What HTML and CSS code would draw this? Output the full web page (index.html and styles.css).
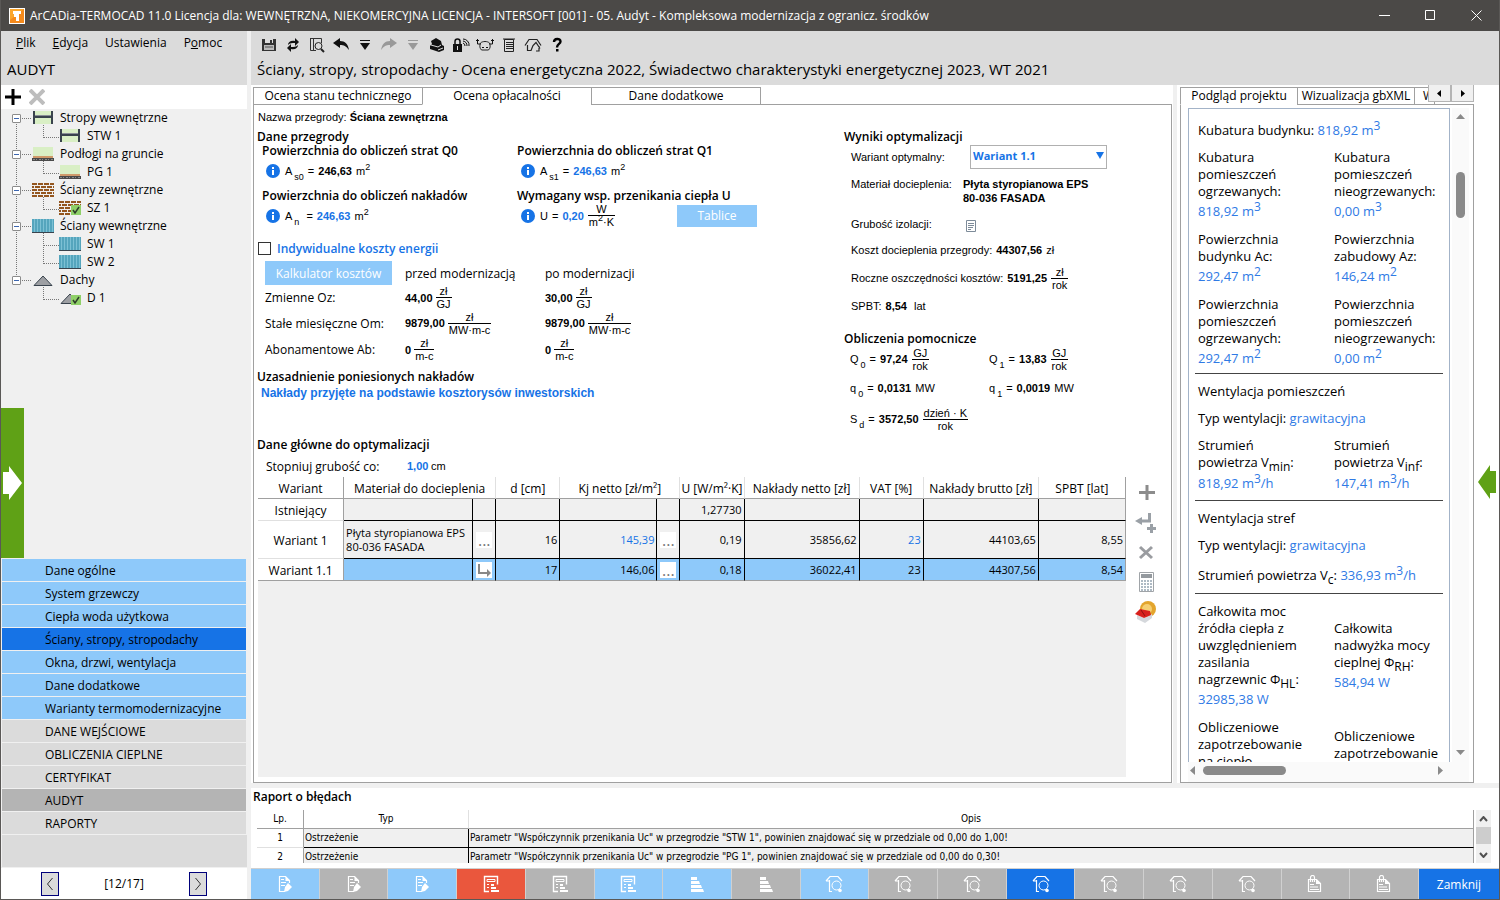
FILE: index.html
```html
<!DOCTYPE html>
<html lang="pl">
<head>
    <meta charset="UTF-8">
    <title>ArCADia-TERMOCAD 11.0</title>
    <link rel="stylesheet" href="styles.css">
</head>
<body>
    <!-- ikony -->
    <svg class="sprite" width="0" height="0" aria-hidden="true">
        <symbol id="i-strop" viewBox="0 0 22 14">
            <rect x="1" width="20" height="13" fill="#d9efc5"/>
            <path d="M1 0h2v13H1zM19 0h2v13h-2zM3 5h16v2H3z" fill="#39434d"/>
            <path d="M3 4h16v1H3z" fill="#8a8f96"/>
        </symbol>
        <symbol id="i-grunt" viewBox="0 0 22 14">
            <rect x="1" width="20" height="9" fill="#d9efc5"/>
            <rect x="1" y="9" width="20" height="3" fill="#cf9a6b"/>
            <rect y="11" width="22" height="3" fill="#4a4a4a"/>
            <path d="M1 12.500h20" stroke="#8c8c8c" stroke-dasharray="2 1 1 2"/>
        </symbol>
        <symbol id="i-mur" viewBox="0 0 22 14">
            <path d="M0 1h22M0 7h22M0 13h22" stroke="#94561f" stroke-width="2" stroke-dasharray="5 1"/>
            <path d="M0 4h22M0 10h22" stroke="#94561f" stroke-width="2" stroke-dasharray="5 1" stroke-dashoffset="3"/>
        </symbol>
        <symbol id="i-sciana" viewBox="0 0 22 14">
            <rect width="22" height="13" fill="#55a5bd"/>
            <path d="M2.500 0v13M5.500 0v13M8.500 0v13M11.500 0v13M14.500 0v13M17.500 0v13M20.500 0v13" stroke="#7cc0d4"/>
            <rect y="13" width="22" height="1" fill="#39434d"/>
        </symbol>
        <symbol id="i-dach" viewBox="0 0 22 14">
            <path d="M2 12.500L11 3l9 9.500z" fill="#9d9fa3" stroke="#39434d"/>
        </symbol>
        <symbol id="i-ok" viewBox="0 0 10 10">
            <rect width="10" height="10" fill="#8fd068"/>
            <path d="M2 5l2 3 4-6" fill="none" stroke="#2d3b2a" stroke-width="1.500"/>
        </symbol>
        <symbol id="i-info" viewBox="0 0 14 14">
            <circle cx="7" cy="7" r="7" fill="#1673e6"/>
            <path d="M6 3h2v2H6zM6 6h2v5H6z" fill="#fff"/>
        </symbol>
        <symbol id="i-edit" viewBox="0 0 16 18">
            <path d="M8 16.500H2.500v-15h6l4 4V8" fill="none" stroke="#fff" stroke-width="1.200"/>
            <path d="M8.500 1v5h4.500zM4 7h5v1H4zM4 10h4v1H4zM4 4h3v1H4z" fill="#fff"/>
            <path d="M11 8l4 4-4 4-4 1 1-5z" fill="#fff"/>
        </symbol>
        <symbol id="i-calc" viewBox="0 0 16 18">
            <path d="M6 16.500H1.500v-15h13v8" fill="none" stroke="#fff" stroke-width="1.400"/>
            <path d="M4 4.500h8v2H4z" fill="none" stroke="#fff"/>
            <path d="M4 9h2v1H4zM4 12h2v1H4zM8 9h3v2H8zM8 12h5v2H8zM8 15h8v2H8z" fill="#fff"/>
        </symbol>
        <symbol id="i-bars" viewBox="0 0 16 18">
            <path d="M2 2h6v3H2zM2 6h8l1 3H2zM2 10h10l1 3H2zM2 14h12l1 3H2z" fill="#fff"/>
        </symbol>
        <symbol id="i-house" viewBox="0 0 20 18">
            <path d="M2 6l4-4.500h8L18 6M5.500 5v11.500H8M2 6h4" fill="none" stroke="#fff" stroke-width="1.200"/>
            <circle cx="12.500" cy="10.500" r="4.500" fill="none" stroke="#fff"/>
            <circle cx="16" cy="15.500" r="1.800" fill="#fff"/>
        </symbol>
        <symbol id="i-doc" viewBox="0 0 16 18">
            <path d="M1.500 4.500h8l4 4v8h-12z" fill="none" stroke="#fff" stroke-width="1.200"/>
            <path d="M9 4v5h5zM3 9h4v1H3zM3 11.500h8v1H3zM3 14h9v1H3z" fill="#fff"/>
            <path d="M3.500 7V2.500a2 2 0 014 0V7M5.500 4v3" fill="none" stroke="#fff" stroke-width="1.200"/>
        </symbol>
    </svg>

    <div class="window">
        <header class="titlebar">
            <svg class="logo" width="16" height="16" viewBox="0 0 16 16">
                <rect width="16" height="16" fill="#fff"/>
                <rect x="1" y="1" width="14" height="14" fill="#f58a1c"/>
                <path d="M1 1h14L1 12z" fill="#fba62c"/>
                <path d="M4 3h8v3h-2v7H7V9H5V6H4z" fill="#fff"/>
            </svg>
            <span class="titlebar-text">ArCADia-TERMOCAD 11.0 Licencja dla: WEWNĘTRZNA, NIEKOMERCYJNA LICENCJA - INTERSOFT [001] - 05. Audyt - Kompleksowa modernizacja z ogranicz. środków</span>
            <button class="win-btn" aria-label="Minimalizuj"><svg width="11" height="11"><path d="M0 5.500h11" stroke="#fff"/></svg></button>
            <button class="win-btn" aria-label="Maksymalizuj"><svg width="11" height="11"><path d="M.5.500h9v9h-9z" fill="none" stroke="#fff"/></svg></button>
            <button class="win-btn" aria-label="Zamknij okno"><svg width="11" height="11"><path d="M.5.500l10 10M10.500.500l-10 10" stroke="#fff"/></svg></button>
        </header>

        <div class="body">
            <aside class="sidebar">
                <div class="side-head">
                    <nav class="menu">
                        <a href="#"><u>P</u>lik</a>
                        <a href="#"><u>E</u>dycja</a>
                        <a href="#">Ustawienia</a>
                        <a href="#">P<u>o</u>moc</a>
                    </nav>
                    <h1>AUDYT</h1>
                </div>
                <div class="tree-tools">
                    <button aria-label="Dodaj"><svg width="16" height="16"><path d="M8 0v16M0 8h16" stroke="#000" stroke-width="3"/></svg></button>
                    <button aria-label="Usuń"><svg width="16" height="16"><path d="M1 1l14 14M15 1L1 15" stroke="#bdbdbd" stroke-width="4"/></svg></button>
                </div>
                <div class="tree">
                    <ul>
                        <li><div class="node"><span class="toggle"></span><svg width="22" height="14"><use href="#i-strop"/></svg>Stropy wewnętrzne</div>
                            <ul><li><div class="node"><svg width="22" height="14"><use href="#i-strop"/></svg>STW 1</div></li></ul>
                        </li>
                        <li><div class="node"><span class="toggle"></span><svg width="22" height="14"><use href="#i-grunt"/></svg>Podłogi na gruncie</div>
                            <ul><li><div class="node"><svg width="22" height="14"><use href="#i-grunt"/></svg>PG 1</div></li></ul>
                        </li>
                        <li><div class="node"><span class="toggle"></span><svg width="22" height="14"><use href="#i-mur"/></svg>Ściany zewnętrzne</div>
                            <ul><li><div class="node"><svg width="22" height="14"><use href="#i-mur"/><use href="#i-ok" x="12" y="4" width="10" height="10"/></svg>SZ 1</div></li></ul>
                        </li>
                        <li><div class="node"><span class="toggle"></span><svg width="22" height="14"><use href="#i-sciana"/></svg>Ściany wewnętrzne</div>
                            <ul>
                                <li><div class="node"><svg width="22" height="14"><use href="#i-sciana"/></svg>SW 1</div></li>
                                <li><div class="node"><svg width="22" height="14"><use href="#i-sciana"/></svg>SW 2</div></li>
                            </ul>
                        </li>
                        <li><div class="node"><span class="toggle"></span><svg width="22" height="14"><use href="#i-dach"/></svg>Dachy</div>
                            <ul><li><div class="node"><svg width="22" height="14"><use href="#i-dach"/><use href="#i-ok" x="12" y="4" width="10" height="10"/></svg>D 1</div></li></ul>
                        </li>
                    </ul>
                    <button class="slide-tab" aria-label="Rozwiń">
                        <svg width="19" height="34"><path d="M0 6h6V0l13 17L6 34v-6H0z" fill="#fff"/></svg>
                    </button>
                </div>
                <nav class="steps">
                    <a href="#">Dane ogólne</a>
                    <a href="#">System grzewczy</a>
                    <a href="#">Ciepła woda użytkowa</a>
                    <a href="#" class="active">Ściany, stropy, stropodachy</a>
                    <a href="#">Okna, drzwi, wentylacja</a>
                    <a href="#">Dane dodatkowe</a>
                    <a href="#">Warianty termomodernizacyjne</a>
                    <a href="#" class="group">DANE WEJŚCIOWE</a>
                    <a href="#" class="group">OBLICZENIA CIEPLNE</a>
                    <a href="#" class="group">CERTYFIKAT</a>
                    <a href="#" class="group current">AUDYT</a>
                    <a href="#" class="group">RAPORTY</a>
                </nav>
                <div class="steps-rest"></div>
                <div class="pager">
                    <button aria-label="Poprzednia"><svg width="8" height="14"><path d="M6.500 1l-5 6 5 6" fill="none" stroke="#333"/></svg></button>
                    <span>[12/17]</span>
                    <button aria-label="Następna"><svg width="8" height="14"><path d="M1.500 1l5 6-5 6" fill="none" stroke="#333"/></svg></button>
                </div>
            </aside>

            <main class="main">
                <div class="main-head">
                    <div class="toolbar">
                        <button aria-label="Zapisz"><svg width="16" height="16"><path d="M1 2h14v12H1z" fill="#333"/><path d="M4 2h8v4H4z" fill="#ddd"/><path d="M9 3h2v3H9z" fill="#333"/><path d="M3 8h10v5H3z" fill="#bbb"/><path d="M4 10h8" stroke="#555"/></svg></button>
                        <button aria-label="Odśwież"><svg width="16" height="16"><path d="M3 8c0-3 3-5 7-4V1l4 4-4 4V6C7 6 5 6 3 8zM13 8c0 3-3 5-7 4v3l-4-4 4-4v3c3 0 5 0 7-2z" fill="#111"/></svg></button>
                        <button aria-label="Podgląd"><svg width="16" height="16"><path d="M1.500 1.500h11V6M1.500 1v12.500H7M4.500 2v11" fill="none" stroke="#333"/><circle cx="9.500" cy="9" r="3.500" fill="none" stroke="#222"/><path d="M12 12l3 3" stroke="#222" stroke-width="2"/></svg></button>
                        <button aria-label="Cofnij"><svg width="16" height="16"><path d="M0 6l7-5v3c5 0 8 3 9 9-3-4-5-5-9-5v3z" fill="#111"/></svg></button>
                        <button aria-label="Lista cofania"><svg width="16" height="16"><path d="M3 3.500h10" stroke="#111"/><path d="M3 6h10l-5 7z" fill="#111"/></svg></button>
                        <button aria-label="Ponów"><svg width="16" height="16"><path d="M16 6L9 1v3C4 4 1 7 0 13c3-4 5-5 9-5v3z" fill="#999"/></svg></button>
                        <button aria-label="Lista ponowień"><svg width="16" height="16"><path d="M3 3.500h10" stroke="#999"/><path d="M3 6h10l-5 7z" fill="#999"/></svg></button>
                        <button aria-label="Biblioteka"><svg width="16" height="16"><path d="M2 4l5-3 5 3 1 4 2 1v4l-5 2-9-3V9l2-2z" fill="#111"/><path d="M2 8l7 2 3-2M9 13l5-2" stroke="#ddd" fill="none"/></svg></button>
                        <button aria-label="Licencja"><svg width="18" height="16"><path d="M1 7h9v8H1z" fill="#111"/><path d="M3 7V4.500a2.500 2.500 0 015 0V7" fill="none" stroke="#111" stroke-width="1.500"/><path d="M5.500 9v4" stroke="#ddd"/><path d="M11 6a3 3 0 012 3M11 4a5 5 0 014 5M11 2a6 6 0 016 7" fill="none" stroke="#111"/></svg></button>
                        <button aria-label="Skarbonka"><svg width="18" height="16"><path d="M4.500 6c2-2 7-2 9 0 1 3 1 5-1 7h-7c-2-2-2-4-1-7z" fill="none" stroke="#222"/><path d="M1.500 2v5h3M0 3.500h3M16.500 2v5h-3M15 3.500h3M6 10.500h2M10 10.500h2" fill="none" stroke="#111"/></svg></button>
                        <button aria-label="Raport"><svg width="16" height="16"><path d="M3.500 2.500h9v12h-9z" fill="none" stroke="#222"/><path d="M2 2h12M5 5.500h7M5 7.500h7M5 9.500h7M5 11.500h7" stroke="#222"/></svg></button>
                        <button aria-label="Budynek"><svg width="18" height="16"><path d="M1 8.500L5 2.500h8l4 6M3.500 8v5.500h4M7 13.500l2-5 3-3 4 6M15 9v5h-3" fill="none" stroke="#222" stroke-width="1.200"/></svg></button>
                        <button aria-label="Pomoc"><svg width="16" height="16"><path d="M5 5c0-4 6.500-4 6.500-.5C11.500 7 8 7 8 10.500" fill="none" stroke="#000" stroke-width="2.400"/><path d="M7 12h2.500v2.500H7z"/></svg></button>
                    </div>
                    <h2>Ściany, stropy, stropodachy - Ocena energetyczna 2022, Świadectwo charakterystyki energetycznej 2023, WT 2021</h2>
                </div>

                <div class="workspace">
                    <section class="editor">
                        <div class="tabs" role="tablist">
                            <button role="tab">Ocena stanu technicznego</button>
                            <button role="tab" class="selected">Ocena opłacalności</button>
                            <button role="tab">Dane dodatkowe</button>
                            <span class="tabs-fill"></span>
                        </div>
                        <div class="tab-page">
                            <div class="form">
                                <div class="form-left">
                                    <p class="name-row">Nazwa przegrody: <b>Ściana zewnętrzna</b></p>
                                    <h3>Dane przegrody</h3>
                                    <div class="areas">
                                        <div class="area">
                                            <h4>Powierzchnia do obliczeń strat Q0</h4>
                                            <p><svg width="14" height="14"><use href="#i-info"/></svg><span>A<sub>s0</sub></span><span>=</span><b>246,63</b><span>m<sup>2</sup></span></p>
                                        </div>
                                        <div class="area">
                                            <h4>Powierzchnia do obliczeń strat Q1</h4>
                                            <p><svg width="14" height="14"><use href="#i-info"/></svg><span>A<sub>s1</sub></span><span>=</span><b class="blue">246,63</b><span>m<sup>2</sup></span></p>
                                        </div>
                                        <div class="area">
                                            <h4>Powierzchnia do obliczeń nakładów</h4>
                                            <p><svg width="14" height="14"><use href="#i-info"/></svg><span>A<sub>n</sub></span><span>&nbsp;=</span><b class="blue">246,63</b><span>m<sup>2</sup></span></p>
                                        </div>
                                        <div class="area">
                                            <h4>Wymagany wsp. przenikania ciepła U</h4>
                                            <p><svg width="14" height="14"><use href="#i-info"/></svg><span>U</span><span>=</span><b class="blue">0,20</b><span class="frac"><i>W</i><i>m<sup>2</sup>·K</i></span><button class="btn btn-tables">Tablice</button></p>
                                        </div>
                                    </div>
                                    <label class="check"><input type="checkbox"> Indywidualne koszty energii</label>
                                    <div class="costs">
                                        <button class="btn">Kalkulator kosztów</button><span>przed modernizacją</span><span>po modernizacji</span>
                                        <span>Zmienne Oz:</span>
                                        <div class="val"><b>44,00</b><span class="frac"><i>zł</i><i>GJ</i></span></div>
                                        <div class="val"><b>30,00</b><span class="frac"><i>zł</i><i>GJ</i></span></div>
                                        <span>Stałe miesięczne Om:</span>
                                        <div class="val"><b>9879,00</b><span class="frac"><i>zł</i><i>MW·m-c</i></span></div>
                                        <div class="val"><b>9879,00</b><span class="frac"><i>zł</i><i>MW·m-c</i></span></div>
                                        <span>Abonamentowe Ab:</span>
                                        <div class="val"><b>0</b><span class="frac"><i>zł</i><i>m-c</i></span></div>
                                        <div class="val"><b>0</b><span class="frac"><i>zł</i><i>m-c</i></span></div>
                                    </div>
                                    <h3>Uzasadnienie poniesionych nakładów</h3>
                                    <p class="reason">Nakłady przyjęte na podstawie kosztorysów inwestorskich</p>
                                    <h3>Dane główne do optymalizacji</h3>
                                    <div class="step-row"><label for="step">Stopniuj grubość co:</label><input id="step" value="1,00"><span>cm</span></div>
                                </div>

                                <div class="form-right">
                                    <h3>Wyniki optymalizacji</h3>
                                    <div class="res">
                                        <label for="variant">Wariant optymalny:</label>
                                        <span class="select"><select id="variant"><option>Wariant 1</option><option selected>Wariant 1.1</option></select></span>
                                    </div>
                                    <div class="res res-material"><span>Materiał docieplenia:</span><b>Płyta styropianowa EPS<br>80-036 FASADA</b></div>
                                    <div class="res"><span>Grubość izolacji:</span><button class="note-btn" aria-label="Grubość izolacji"><svg width="10" height="12"><path d="M.5.500h9v11h-9z" fill="#fff" stroke="#7d8b99"/><path d="M2 3.500h6M2 5.500h6M2 7.500h5M2 9.500h3" stroke="#7d8b99"/></svg></button></div>
                                    <div class="val"><span>Koszt docieplenia przegrody:</span><b>44307,56</b><span>zł</span></div>
                                    <div class="val"><span>Roczne oszczędności kosztów:</span><b>5191,25</b><span class="frac"><i>zł</i><i>rok</i></span></div>
                                    <div class="val"><span>SPBT:</span><b>8,54</b><span>&nbsp;lat</span></div>
                                    <h3>Obliczenia pomocnicze</h3>
                                    <div class="helpers">
                                        <div class="val"><span>Q<sub>0</sub></span><span>=</span><b>97,24</b><span class="frac"><i>GJ</i><i>rok</i></span></div>
                                        <div class="val"><span>Q<sub>1</sub></span><span>=</span><b>13,83</b><span class="frac"><i>GJ</i><i>rok</i></span></div>
                                        <div class="val"><span>q<sub>0</sub></span><span>=</span><b>0,0131</b><span>MW</span></div>
                                        <div class="val"><span>q<sub>1</sub></span><span>=</span><b>0,0019</b><span>MW</span></div>
                                        <div class="val"><span>S<sub>d</sub></span><span>=</span><b>3572,50</b><span class="frac"><i>dzień · K</i><i>rok</i></span></div>
                                    </div>
                                </div>
                            </div>

                            <div class="variants">
                                <div class="grid-area">
                                    <table class="variant-table">
                                        <colgroup><col class="c86"><col class="c129"><col class="c23"><col class="c64"><col class="c97"><col class="c23"><col class="c64"><col class="c115"><col class="c64"><col class="c115"><col class="c87"></colgroup>
                                        <thead>
                                            <tr><th>Wariant</th><th colspan="2">Materiał do docieplenia</th><th>d [cm]</th><th colspan="2">Kj netto [zł/m²]</th><th>U [W/m²·K]</th><th>Nakłady netto [zł]</th><th>VAT [%]</th><th>Nakłady brutto [zł]</th><th>SPBT [lat]</th></tr>
                                        </thead>
                                        <tbody>
                                            <tr><th>Istniejący</th><td></td><td></td><td></td><td></td><td></td><td>1,27730</td><td></td><td></td><td></td><td></td></tr>
                                            <tr class="tall"><th>Wariant 1</th><td class="mat">Płyta styropianowa EPS<br>80-036 FASADA</td><td class="act"><button>...</button></td><td>16</td><td class="blue">145,39</td><td class="act"><button>...</button></td><td>0,19</td><td>35856,62</td><td class="blue">23</td><td>44103,65</td><td>8,55</td></tr>
                                            <tr class="picked"><th>Wariant 1.1</th><td></td><td class="act"><button aria-label="Podrzędny"><svg width="14" height="14"><path d="M2 1v9h9" fill="none" stroke="#888" stroke-width="2"/><path d="M10 6l4 4-4 4z" fill="#888"/></svg></button></td><td>17</td><td>146,06</td><td class="act"><button>...</button></td><td>0,18</td><td>36022,41</td><td>23</td><td>44307,56</td><td>8,54</td></tr>
                                        </tbody>
                                    </table>
                                </div>
                                <div class="row-tools">
                                    <button aria-label="Dodaj wariant"><svg width="22" height="22"><path d="M12 4v15M4 11.500h16" stroke="#8c8c8c" stroke-width="3"/></svg></button>
                                    <button aria-label="Dodaj podwariant"><svg width="22" height="22"><path d="M14.500 2v8H6" fill="none" stroke="#9aa0a6" stroke-width="3"/><path d="M0 10l7-4v8z" fill="#9aa0a6"/><path d="M16.500 13v9M12 17.500h9" stroke="#9aa0a6" stroke-width="3"/></svg></button>
                                    <button aria-label="Usuń wariant"><svg width="22" height="22"><path d="M5 6l12 11M17 6L5 17" stroke="#9a9ca0" stroke-width="3"/></svg></button>
                                    <button aria-label="Kalkulator"><svg width="22" height="22"><path d="M4.500 1.500h14v19h-14z" fill="#fff" stroke="#a0a4a8"/><path d="M6 3h11v4H6z" fill="#94999e"/><path d="M6 10h11M6 13h11M6 16h11M6 19h11" stroke="#aebac4" stroke-width="2" stroke-dasharray="2 1"/></svg></button>
                                    <button aria-label="Koszty"><svg width="22" height="22"><circle cx="13" cy="8" r="8" fill="#e3a52d"/><circle cx="12" cy="8" r="5" fill="#f6cf72"/><path d="M2 14l7 3 8-4v4l-7 5-8-4z" fill="#d5d8dc"/><path d="M0 13l5-5 10 2 1 4-7 3z" fill="#d8201c"/><path d="M6 9l4 6" stroke="#8f100e"/></svg></button>
                                </div>
                            </div>
                        </div>
                    </section>

                    <aside class="preview">
                        <div class="preview-box">
                            <div class="tabs preview-tabs" role="tablist">
                                <button role="tab" class="selected">Podgląd projektu</button>
                                <button role="tab">Wizualizacja gbXML</button>
                                <button role="tab" class="cut">W</button>
                                <span class="tabs-fill"></span>
                                <div class="tab-scroll">
                                    <button aria-label="W lewo"><svg width="5" height="7"><path d="M4 0v7L0 3.500z"/></svg></button><button aria-label="W prawo"><svg width="5" height="7"><path d="M1 0v7l4-3.500z"/></svg></button>
                                </div>
                            </div>
                            <div class="preview-page">
                                <div class="doc">
                                    <p>Kubatura budynku: <em>818,92 m<sup>3</sup></em></p>
                                    <div class="pair">
                                        <div>Kubatura pomieszczeń ogrzewanych:<em>818,92 m<sup>3</sup></em></div>
                                        <div>Kubatura pomieszczeń nieogrzewanych:<em>0,00 m<sup>3</sup></em></div>
                                    </div>
                                    <div class="pair">
                                        <div>Powierzchnia budynku Ac:<em>292,47 m<sup>2</sup></em></div>
                                        <div>Powierzchnia zabudowy Az:<em>146,24 m<sup>2</sup></em></div>
                                    </div>
                                    <div class="pair">
                                        <div>Powierzchnia pomieszczeń ogrzewanych:<em>292,47 m<sup>2</sup></em></div>
                                        <div>Powierzchnia pomieszczeń nieogrzewanych:<em>0,00 m<sup>2</sup></em></div>
                                    </div>
                                    <hr>
                                    <p>Wentylacja pomieszczeń</p>
                                    <p>Typ wentylacji: <em>grawitacyjna</em></p>
                                    <div class="pair air">
                                        <div>Strumień<br>powietrza V<sub>min</sub>:<em>818,92 m<sup>3</sup>/h</em></div>
                                        <div>Strumień<br>powietrza V<sub>inf</sub>:<em>147,41 m<sup>3</sup>/h</em></div>
                                    </div>
                                    <hr>
                                    <p>Wentylacja stref</p>
                                    <p>Typ wentylacji: <em>grawitacyjna</em></p>
                                    <p class="flow">Strumień powietrza V<sub>c</sub>: <em>336,93 m<sup>3</sup>/h</em></p>
                                    <hr>
                                    <div class="pair">
                                        <div>Całkowita moc<br>źródła ciepła z<br>uwzględnieniem<br>zasilania<br>nagrzewnic Φ<sub>HL</sub>:<em>32985,38 W</em></div>
                                        <div>Całkowita<br>nadwyżka mocy<br>cieplnej Φ<sub>RH</sub>:<em>584,94 W</em></div>
                                    </div>
                                    <div class="pair">
                                        <div>Obliczeniowe zapotrzebowanie na ciepło</div>
                                        <div>Obliczeniowe zapotrzebowanie</div>
                                    </div>
                                </div>
                                <div class="vbar">
                                    <svg width="9" height="5"><path d="M0 5h9L4.500 0z" fill="#8a8a8a"/></svg>
                                    <span class="vthumb"></span>
                                    <svg width="9" height="5"><path d="M0 0h9L4.500 5z" fill="#8a8a8a"/></svg>
                                </div>
                                <div class="hbar">
                                    <svg width="5" height="9"><path d="M5 0v9L0 4.500z" fill="#8a8a8a"/></svg>
                                    <span class="hthumb"></span>
                                    <svg width="5" height="9"><path d="M0 0v9l5-4.500z" fill="#8a8a8a"/></svg>
                                </div>
                            </div>
                        </div>
                        <button class="slide-arrow" aria-label="Rozwiń podgląd"><svg width="18" height="34"><path d="M18 6h-6V0L0 17l12 17v-6h6z" fill="#5fa116"/></svg></button>
                    </aside>
                </div>

                <section class="report">
                    <h3>Raport o błędach</h3>
                    <div class="report-body">
                        <div class="report-scroll">
                            <table class="report-table">
                                <colgroup><col class="lp"><col class="typ"><col></colgroup>
                                <thead><tr><th>Lp.</th><th>Typ</th><th>Opis</th></tr></thead>
                                <tbody>
                                    <tr><th>1</th><td>Ostrzeżenie</td><td>Parametr "Współczynnik przenikania Uc" w przegrodzie "STW 1", powinien znajdować się w przedziale od 0,00 do 1,00!</td></tr>
                                    <tr><th>2</th><td>Ostrzeżenie</td><td>Parametr "Współczynnik przenikania Uc" w przegrodzie "PG 1", powinien znajdować się w przedziale od 0,00 do 0,30!</td></tr>
                                </tbody>
                            </table>
                        </div>
                        <div class="rbar">
                            <svg width="9" height="6"><path d="M1 5l3.500-4L8 5" fill="none" stroke="#505050" stroke-width="2"/></svg>
                            <span class="rthumb"></span>
                            <svg width="9" height="6"><path d="M1 1l3.500 4L8 1" fill="none" stroke="#505050" stroke-width="2"/></svg>
                        </div>
                    </div>
                </section>

                <footer class="bottom">
                    <button class="sky" aria-label="Dane 1"><svg width="16" height="18"><use href="#i-edit"/></svg></button>
                    <button aria-label="Dane 2"><svg width="16" height="18"><use href="#i-edit"/></svg></button>
                    <button class="sky" aria-label="Dane 3"><svg width="16" height="18"><use href="#i-edit"/></svg></button>
                    <button class="red" aria-label="Obliczenia 1"><svg width="16" height="18"><use href="#i-calc"/></svg></button>
                    <button aria-label="Obliczenia 2"><svg width="16" height="18"><use href="#i-calc"/></svg></button>
                    <button class="sky" aria-label="Obliczenia 3"><svg width="16" height="18"><use href="#i-calc"/></svg></button>
                    <button class="sky" aria-label="Certyfikat 1"><svg width="16" height="18"><use href="#i-bars"/></svg></button>
                    <button aria-label="Certyfikat 2"><svg width="16" height="18"><use href="#i-bars"/></svg></button>
                    <button class="sky" aria-label="Audyt 1"><svg width="20" height="18"><use href="#i-house"/></svg></button>
                    <button aria-label="Audyt 2"><svg width="20" height="18"><use href="#i-house"/></svg></button>
                    <button aria-label="Audyt 3"><svg width="20" height="18"><use href="#i-house"/></svg></button>
                    <button class="active" aria-label="Audyt 4"><svg width="20" height="18"><use href="#i-house"/></svg></button>
                    <button aria-label="Audyt 5"><svg width="20" height="18"><use href="#i-house"/></svg></button>
                    <button aria-label="Audyt 6"><svg width="20" height="18"><use href="#i-house"/></svg></button>
                    <button aria-label="Audyt 7"><svg width="20" height="18"><use href="#i-house"/></svg></button>
                    <button aria-label="Raport 1"><svg width="16" height="18"><use href="#i-doc"/></svg></button>
                    <button aria-label="Raport 2"><svg width="16" height="18"><use href="#i-doc"/></svg></button>
                    <button class="close">Zamknij</button>
                </footer>
            </main>
        </div>
    </div>
</body>
</html>
```

FILE: styles.css
```css
* {
    box-sizing: border-box;
}
body {
    margin: 0;
    font-family: "Open Sans", "Noto Sans", sans-serif;
    font-size: 12px;
    color: #000;
}
h1, h2, h3, h4, p, ul {
    margin: 0;
    padding: 0;
}
button {
    font: inherit;
    color: inherit;
    border: 0;
    padding: 0;
    background: none;
    cursor: pointer;
}
svg {
    display: block;
    flex: none;
}
a {
    color: inherit;
    text-decoration: none;
}
.sprite {
    position: absolute;
}
.blue {
    color: #1673e6;
}

.window {
    display: flex;
    flex-direction: column;
    height: 100vh;
    min-width: 1200px;
    border: 1px solid #5a5856;
    border-top: 0;
}
.titlebar {
    display: flex;
    align-items: center;
    height: 31px;
    padding-left: 8px;
    background-color: #4b4947;
    color: #fff;
}
.titlebar-text {
    flex: 1;
    margin-left: 5px;
    white-space: nowrap;
}
.win-btn {
    display: flex;
    align-items: center;
    justify-content: center;
    width: 46px;
    height: 31px;
}
.body {
    display: flex;
    flex: 1;
    min-height: 0;
    background-color: #f0f0f0;
}

/* lewy panel */
.sidebar {
    display: flex;
    flex-direction: column;
    width: 246px;
    margin-right: 4px;
}
.side-head {
    height: 54px;
    background-color: #dbdbdb;
}
.menu {
    display: flex;
    gap: 17px;
    padding-left: 15px;
    line-height: 24px;
}
.side-head h1 {
    padding-left: 6px;
    font-size: 15px;
    font-weight: normal;
    line-height: 28px;
}
.tree-tools {
    display: flex;
    align-items: center;
    gap: 8px;
    height: 24px;
    padding-left: 4px;
    background-color: #fff;
}
.tree {
    position: relative;
    flex: 1;
    min-height: 0;
}
.tree ul {
    list-style: none;
}
.tree > ul {
    padding-left: 11px;
}
.tree > ul > li {
    position: relative;
}
.tree > ul > li:not(:last-child)::before {
    content: "";
    position: absolute;
    top: 10px;
    bottom: -10px;
    left: 4px;
    border-left: 1px dotted #777;
}
.tree ul ul {
    margin-left: 31px;
}
.tree ul ul li {
    position: relative;
}
.tree ul ul li::before {
    content: "";
    position: absolute;
    left: 0;
    top: -2px;
    width: 15px;
    height: 12px;
    border-left: 1px dotted #777;
    border-bottom: 1px dotted #777;
}
.tree ul ul li + li::before {
    top: -8px;
    height: 18px;
}
.node {
    display: flex;
    align-items: center;
    height: 18px;
    line-height: 16px;
}
.node svg {
    margin-right: 6px;
}
.tree ul ul .node {
    padding-left: 16px;
}
.toggle {
    position: relative;
    width: 9px;
    height: 9px;
    margin-right: 11px;
    border: 1px solid #8c8c8c;
    border-radius: 1px;
    background: linear-gradient(#3d66b0, #3d66b0) center / 5px 1px no-repeat #fff;
}
.toggle::after {
    content: "";
    position: absolute;
    top: 3px;
    left: 9px;
    width: 9px;
    border-top: 1px dotted #777;
}
.slide-tab {
    position: absolute;
    left: 0;
    bottom: 1px;
    width: 23px;
    height: 150px;
    padding-left: 2px;
    background-color: #5fa116;
}
.steps {
    display: flex;
    flex-direction: column;
    gap: 1px;
    padding: 0 1px 1px;
}
.steps a {
    height: 22px;
    padding-left: 43px;
    background-color: #8ec9fa;
    line-height: 24px;
    white-space: nowrap;
}
.steps a.active {
    background-color: #1673e6;
}
.steps a.group {
    background-color: #dbdbdb;
}
.steps a.current {
    background-color: #b4b4b4;
}
.steps-rest {
    height: 32px;
    margin-left: 1px;
    background-color: #dbdbdb;
}
.pager {
    display: flex;
    align-items: center;
    justify-content: space-between;
    height: 31px;
    margin-top: 1px;
    padding: 0 40px;
    background-color: #fff;
}
.pager button {
    display: flex;
    align-items: center;
    justify-content: center;
    width: 18px;
    height: 24px;
    border: 1px solid #00007a;
    background-color: #dbdbdb;
}

/* część główna */
.main {
    display: flex;
    flex: 1;
    flex-direction: column;
    min-width: 0;
}
.main-head {
    height: 54px;
    background-color: #dbdbdb;
}
.toolbar {
    display: flex;
    align-items: center;
    gap: 8px;
    height: 27px;
    padding-left: 10px;
}
.toolbar button {
    display: flex;
    justify-content: center;
    width: 16px;
}
.main-head h2 {
    padding-left: 6px;
    font-size: 15px;
    font-weight: normal;
    line-height: 22px;
    white-space: nowrap;
}
.workspace {
    display: flex;
    flex: 1;
    gap: 4px;
    min-height: 0;
}
.editor {
    display: flex;
    flex: 1;
    flex-direction: column;
    min-width: 0;
    padding: 2px 1px 0 2px;
    background-color: #fff;
}
.tabs {
    display: flex;
    height: 18px;
}
.tabs button {
    width: 169px;
    border: 1px solid #a0a0a0;
    border-right: 0;
    line-height: 14px;
    white-space: nowrap;
}
.tabs button.selected {
    border-bottom-color: #fff;
}
.tabs-fill {
    flex: 1;
    border-bottom: 1px solid #a0a0a0;
    border-left: 1px solid #a0a0a0;
}
.tab-page {
    display: flex;
    flex: 1;
    flex-direction: column;
    min-height: 0;
    border: 1px solid #a0a0a0;
    border-top: 0;
}
.form {
    display: grid;
    grid-template-columns: minmax(0, 1fr) 327px;
    height: 372px;
}
.form h3, .form h4, .report h3 {
    font-size: 12px;
    font-weight: 600;
    line-height: 14px;
    white-space: nowrap;
}
.form-left {
    padding-left: 3px;
}
.name-row {
    height: 25px;
    padding-left: 1px;
    font: 11px/24px "Liberation Sans", Arial, sans-serif;
}
.areas {
    display: grid;
    grid-template-columns: 255px 1fr;
    row-gap: 6px;
    padding-left: 5px;
}
.area p, .val {
    display: flex;
    align-items: center;
    gap: 4px;
    font: 11px "Liberation Sans", Arial, sans-serif;
    white-space: nowrap;
}
.area p {
    height: 25px;
    padding-left: 4px;
}
.area svg {
    margin-right: 1px;
}
sub, sup {
    line-height: 0;
}
.area sub, .val sub {
    margin-left: 2px;
    font-size: 9px;
    vertical-align: -5px;
}
.area sup, .val sup {
    font-size: 9px;
}
.frac {
    display: flex;
    flex-direction: column;
    text-align: center;
    line-height: 12px;
}
.frac i {
    padding: 0 1px;
    font-style: normal;
}
.frac i:first-child {
    border-bottom: 1px solid #000;
}
.btn {
    background-color: #8ec9fa;
    color: #fff;
}
.btn-tables {
    width: 80px;
    height: 22px;
    margin-left: 58px;
    font-family: "Open Sans", "Noto Sans", sans-serif;
    font-size: 12px;
}
.check {
    display: flex;
    align-items: center;
    gap: 6px;
    height: 18px;
    margin-top: 11px;
    color: #1673e6;
    font-weight: 600;
}
.check input {
    appearance: none;
    width: 13px;
    height: 13px;
    margin: 0 0 0 1px;
    border: 1px solid #333;
    background-color: #fff;
}
.costs {
    display: grid;
    grid-template-columns: 127px 127px 127px;
    grid-template-rows: 24px 25px 26px 27px;
    column-gap: 13px;
    align-items: center;
    margin: 4px 0 7px;
    padding-left: 8px;
    white-space: nowrap;
}
.costs .btn {
    align-self: stretch;
}
.costs .val {
    gap: 3px;
}
.reason {
    margin-bottom: 36px;
    padding-left: 4px;
    color: #1673e6;
    font: bold 12px/18px "Liberation Sans", Arial, sans-serif;
}
.step-row {
    display: flex;
    align-items: center;
    height: 28px;
    padding-left: 9px;
}
.step-row label {
    width: 141px;
}
.step-row input {
    width: 24px;
    margin: 0;
    padding: 0;
    border: 0;
    color: #1673e6;
    font: bold 11px "Liberation Sans", Arial, sans-serif;
}
.step-row span {
    font: 11px "Liberation Sans", Arial, sans-serif;
}
.form-right {
    padding-top: 25px;
    font: 11px/14px "Liberation Sans", Arial, sans-serif;
    white-space: nowrap;
}
.form-right h3 {
    font-family: "Open Sans", "Noto Sans", sans-serif;
}
.res {
    display: flex;
    align-items: center;
    height: 25px;
    padding-left: 7px;
}
.res > :first-child {
    width: 112px;
}
.res-material {
    align-items: flex-start;
    height: 34px;
    margin-top: 8px;
}
.select {
    position: relative;
    width: 137px;
    margin-left: 7px;
}
.select select {
    appearance: none;
    width: 100%;
    height: 24px;
    padding: 0 2px 3px;
    border: 1px solid #b0b0b0;
    background-color: #fff;
    color: #1673e6;
    font: bold 11px "Open Sans", "Noto Sans", sans-serif;
}
.select::after {
    content: "";
    position: absolute;
    top: 7px;
    right: 3px;
    border: 4px solid transparent;
    border-top: 7px solid #1673e6;
    border-bottom: 0;
}
.note-btn {
    margin: 4px 0 0 3px;
}
.form-right > .val {
    height: 28px;
    padding-left: 7px;
}
.form-right .val + h3 {
    margin-top: 12px;
}
.helpers {
    display: grid;
    grid-template-columns: 139px 139px;
    grid-template-rows: 26px 32px 30px;
    padding-left: 6px;
}
.variants {
    display: flex;
    flex: 1;
    min-height: 0;
    padding: 0 14px 5px 4px;
}
.grid-area {
    flex: 1;
    background-color: #f0f0f0;
}
.row-tools {
    display: flex;
    flex-direction: column;
    gap: 8px;
    margin: 4px 0 0 9px;
}
table {
    border-collapse: separate;
    border-spacing: 0;
    table-layout: fixed;
    width: 100%;
}
.variant-table th, .variant-table td {
    height: 22px;
    padding: 0 2px;
    line-height: 14px;
    white-space: nowrap;
}
.variant-table th {
    padding: 2px 0 0;
    background-color: #fff;
    font-weight: normal;
}
.variant-table td {
    font-size: 11px;
}
.variant-table thead th {
    border-right: 1px solid #e0e0e0;
    border-bottom: 1px solid #a0a0a0;
}
.variant-table thead th:first-child,
.variant-table tbody th {
    border-right: 1px solid #a0a0a0;
}
.variant-table tbody th {
    border-bottom: 1px solid #e0e0e0;
}
.variant-table td {
    border-right: 1px solid #000;
    border-bottom: 1px solid #000;
    text-align: right;
}
.variant-table tr > :last-child {
    border-right-color: #a0a0a0;
}
.variant-table tr:last-child > * {
    border-bottom-color: #a0a0a0;
}
.variant-table .tall td {
    height: 38px;
}
.variant-table .picked td {
    background-color: #8ec9fa;
}
.variant-table td.mat {
    text-align: left;
}
.variant-table td.act {
    padding: 0 3px;
}
.act button {
    display: flex;
    align-items: center;
    justify-content: center;
    width: 16px;
    height: 16px;
    background-color: #fff;
    color: #777;
    font-size: 16px;
}
.c86 { width: 86px; }
.c129 { width: 129px; }
.c23 { width: 23px; }
.c64 { width: 64px; }
.c97 { width: 97px; }
.c115 { width: 115px; }
.c87 { width: 87px; }

/* podgląd projektu */
.preview {
    position: relative;
    width: 322px;
    padding: 2px 25px 0 3px;
    background-color: #fff;
}
.preview-box {
    display: flex;
    flex-direction: column;
    height: 100%;
}
.preview-tabs {
    position: relative;
}
.preview-tabs button {
    width: 117px;
}
.preview-tabs button.cut {
    width: 20px;
    padding-left: 8px;
    overflow: hidden;
}
.tab-scroll {
    position: absolute;
    right: 0;
    top: -2px;
    display: flex;
}
.tab-scroll button {
    display: flex;
    align-items: center;
    justify-content: center;
    width: 23px;
    height: 17px;
    border: 1px solid #b4b4b4;
    border-top: 0;
    background-color: #f0f0f0;
}
.preview-page {
    display: grid;
    flex: 1;
    grid-template-columns: minmax(0, 1fr) 17px;
    grid-template-rows: minmax(0, 1fr) 20px;
    column-gap: 2px;
    min-height: 0;
    padding: 3px 4px 0 7px;
    border: 1px solid #a0a0a0;
    border-top: 0;
}
.doc {
    padding: 13px 6px 0;
    border: 1px solid #a3b3c8;
    border-bottom: 0;
    overflow: hidden;
    font-size: 13px;
    line-height: 17px;
}
.doc em {
    color: #2f7ae5;
    font-style: normal;
}
.doc p {
    margin-bottom: 10px;
    padding-left: 3px;
    white-space: nowrap;
}
.doc .flow {
    margin: 13px 0 9px;
}
.doc sub, .doc sup {
    font-size: 12px;
}
.doc sup {
    vertical-align: 5px;
}
.doc sub {
    vertical-align: -4px;
}
.pair {
    display: grid;
    grid-template-columns: 110px 110px;
    column-gap: 26px;
    align-items: center;
    margin-bottom: 9px;
    padding-left: 3px;
}
.pair em {
    display: block;
    line-height: 22px;
}
.air em {
    line-height: 25px;
}
.doc hr {
    margin: 0 0 9px;
    border: 0;
    border-top: 1px solid #444;
}
.pair + hr {
    margin-top: -5px;
}
.vbar, .hbar {
    display: flex;
    align-items: center;
    background-color: #fafafa;
}
.vbar {
    flex-direction: column;
    padding: 6px 0 7px;
}
.vthumb {
    width: 9px;
    height: 46px;
    margin: 53px 0 auto;
    border-radius: 5px;
    background-color: #8a8a8a;
}
.hbar {
    grid-column: 1 / 3;
    padding: 0 26px 4px 2px;
}
.hthumb {
    width: 83px;
    height: 9px;
    margin: 0 auto 0 8px;
    border-radius: 5px;
    background-color: #8a8a8a;
}
.slide-arrow {
    position: absolute;
    top: 380px;
    right: 3px;
}

/* raport */
.report {
    height: 80px;
    margin-top: 5px;
    background-color: #fff;
}
.report h3 {
    padding: 2px 0 6px 2px;
}
.report-body {
    display: flex;
    height: 53px;
    padding: 0 8px 0 6px;
}
.report-scroll {
    flex: 1;
    overflow: hidden;
}
.report-table {
    font-family: "DejaVu Sans Condensed", "DejaVu Sans", sans-serif;
    font-size: 10px;
}
.report-table .lp { width: 47px; }
.report-table .typ { width: 165px; }
.report-table th, .report-table td {
    height: 19px;
    padding: 0 1px;
    line-height: 14px;
    white-space: nowrap;
}
.report-table th {
    font-weight: normal;
    border-right: 1px solid #e0e0e0;
    border-bottom: 1px solid #e0e0e0;
}
.report-table thead th {
    border-bottom-color: #a0a0a0;
}
.report-table th:first-child, .report-table tr > :last-child {
    border-right-color: #a0a0a0;
}
.report-table td {
    border-right: 1px solid #000;
    border-bottom: 1px solid #000;
    background-color: #f0f0f0;
}
.rbar {
    display: flex;
    flex-direction: column;
    align-items: center;
    width: 15px;
    margin-left: 2px;
    padding: 6px 0 5px;
    background-color: #f0f0f0;
}
.rthumb {
    width: 15px;
    height: 17px;
    margin: 5px 0 auto;
    background-color: #cdcdcd;
}

/* dolny pasek */
.bottom {
    display: flex;
    height: 31px;
    border-top: 1px solid #d0d0d0;
    background-color: #fff;
}
.bottom button {
    display: flex;
    flex: 1;
    align-items: center;
    justify-content: center;
    border-right: 1px solid #d0d0d0;
    background-color: #b4b4b4;
}
.bottom button.sky {
    background-color: #8ec9fa;
}
.bottom button.red {
    background-color: #ea573d;
}
.bottom button.active {
    background-color: #1673e6;
}
.bottom button.close {
    flex: none;
    width: 80px;
    border: 0;
    background-color: #1673e6;
    color: #fff;
}
```
